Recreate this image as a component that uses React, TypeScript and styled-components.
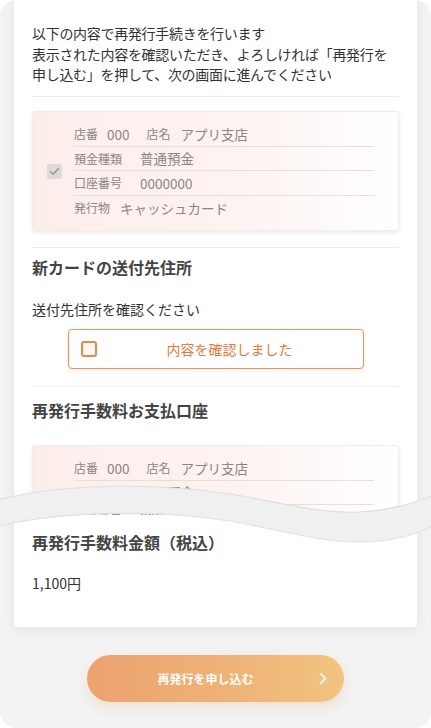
import React from 'react'
import styled, { createGlobalStyle } from 'styled-components'

const GlobalStyle = createGlobalStyle`
    html, body {
        margin: 0;
        padding: 0;
        background: #fff;
    }
    body {
        font-family: "Noto Sans CJK JP", "Noto Sans", sans-serif;
        color: #333;
    }
`

const Frame = styled.div`
    position: relative;
    width: 431px;
    height: 728px;
    background: #f3f3f3;
    border-radius: 16px;
    overflow: hidden;
`

const Card = styled.div`
    margin: 0 14px;
    padding: 23px 18px 34.5px;
    background: #fff;
    border-radius: 0 0 3px 3px;
    box-shadow: 0 2px 14px rgba(0, 0, 0, 0.07);
`

const Intro = styled.p`
    margin: 0;
    font-size: 14px;
    line-height: 20.5px;
    letter-spacing: -0.3px;
    color: #333;
`

const Divider = styled.div<{ $top: number }>`
    height: 1px;
    margin-top: ${p => p.$top}px;
    background: #ececec;
`

const Heading = styled.h2<{ $top: number }>`
    margin: ${p => p.$top}px 0 0;
    font-size: 16px;
    line-height: 24px;
    font-weight: 700;
    color: #444;
`

const Text = styled.p<{ $top: number }>`
    margin: ${p => p.$top}px 0 0;
    font-size: 14px;
    line-height: 20px;
    color: #333;
`

const AccountBox = styled.div<{ $top: number }>`
    display: flex;
    align-items: center;
    gap: 12px;
    margin-top: ${p => p.$top}px;
    padding: 10px 24px 10px 14px;
    border: 1px solid #ededed;
    border-radius: 3px;
    background: linear-gradient(90deg, #fcedeb 0%, #fdf3f1 55%, #ffffff 100%);
    box-shadow: 0 2px 5px rgba(0, 0, 0, 0.08);
`

const GrayCheck = styled.span`
    display: flex;
    align-items: center;
    justify-content: center;
    width: 15px;
    height: 15px;
    flex: none;
    border-radius: 2px;
    background: #dedada;
`

const Rows = styled.div`
    flex: 1;
`

const Row = styled.div`
    display: flex;
    align-items: center;
    height: 24.5px;
    box-sizing: border-box;
    color: #8a8686;
    &:not(:last-child) {
        border-bottom: 1px solid #e6dfde;
    }
`

const Label = styled.span<{ $gap: number }>`
    font-size: 12px;
    margin-right: ${p => p.$gap}px;
`

const Value = styled.span<{ $gap?: number }>`
    font-size: 13.5px;
    margin-right: ${p => p.$gap ?? 0}px;
`

const ConfirmButton = styled.button`
    display: flex;
    align-items: center;
    width: 296px;
    height: 40px;
    margin: 10.5px auto 0;
    padding: 0 0 0 12px;
    border: 1px solid #ec9257;
    border-radius: 4px;
    background: #fff;
    box-shadow: 0 2px 5px rgba(0, 0, 0, 0.08);
    font-family: inherit;
    cursor: pointer;
`

const OrangeBox = styled.span`
    width: 16px;
    height: 16px;
    flex: none;
    box-sizing: border-box;
    border: 2px solid #e8884a;
    border-radius: 3px;
    background: #fdf7f2;
`

const ConfirmLabel = styled.span`
    flex: 1;
    font-size: 14px;
    color: #e27c3c;
    text-align: center;
`

const CutArea = styled.div`
    position: relative;
    margin-top: 23px;
`

const Clip = styled.div`
    height: 70px;
    overflow: hidden;
    padding: 0 4px;
    margin: 0 -4px;
`

const Wave = styled.svg`
    position: absolute;
    left: -32px;
    top: 31px;
    width: 431px;
    height: 75px;
    overflow: visible;
`

const Amount = styled.p`
    margin: 19px 0 0;
    font-size: 14px;
    line-height: 20px;
    color: #333;
`

const SubmitButton = styled.button`
    position: relative;
    display: flex;
    align-items: center;
    justify-content: center;
    width: 257px;
    height: 47px;
    margin: 28px auto 0;
    padding: 0;
    border: none;
    border-radius: 24px;
    background: linear-gradient(90deg, #eda26f 0%, #efb277 55%, #f2c480 100%);
    box-shadow: 0 6px 14px rgba(225, 160, 110, 0.22);
    font-family: inherit;
    font-size: 12px;
    font-weight: 700;
    color: #fff;
    cursor: pointer;
`

const ButtonText = styled.span`
    margin-right: 20px;
`

const Chevron = styled.svg`
    position: absolute;
    right: 17px;
    top: 17px;
`

const Check = () => (
    <svg width="11" height="9" viewBox="0 0 11 9">
        <path d="M1.5 4.8 L4.2 7.3 L9.5 1.5" fill="none" stroke="#9a9696" strokeWidth="1.5" strokeLinecap="round" strokeLinejoin="round" />
    </svg>
)

const Account: React.FC<{ top: number }> = ({ top }) => (
    <AccountBox $top={top}>
        <GrayCheck><Check /></GrayCheck>
        <Rows>
            <Row>
                <Label $gap={9}>店番</Label>
                <Value $gap={17}>000</Value>
                <Label $gap={10}>店名</Label>
                <Value>アプリ支店</Value>
            </Row>
            <Row>
                <Label $gap={18}>預金種類</Label>
                <Value>普通預金</Value>
            </Row>
            <Row>
                <Label $gap={18}>口座番号</Label>
                <Value>0000000</Value>
            </Row>
            <Row>
                <Label $gap={10}>発行物</Label>
                <Value>キャッシュカード</Value>
            </Row>
        </Rows>
    </AccountBox>
)

const App: React.FC = () => {
    return (
        <Frame>
            <GlobalStyle />
            <Card>
                <Intro>
                    以下の内容で再発行手続きを行います<br />
                    表示された内容を確認いただき、よろしければ「再発行を<br />
                    申し込む」を押して、次の画面に進んでください
                </Intro>
                <Divider $top={11.5} />
                <Account top={14} />
                <Divider $top={16} />

                <Heading $top={7}>新カードの送付先住所</Heading>
                <Text $top={19.5}>送付先住所を確認ください</Text>
                <ConfirmButton>
                    <OrangeBox />
                    <ConfirmLabel>内容を確認しました</ConfirmLabel>
                </ConfirmButton>
                <Divider $top={17} />

                <Heading $top={11}>再発行手数料お支払口座</Heading>
                <CutArea>
                    <Clip>
                        <Account top={0} />
                    </Clip>
                    {/* torn section marker */}
                    <Wave viewBox="0 0 431 75">
                        <path
                            d="M-2 24 C60 8 150 6 230 18 C290 28 320 38 360 36 C395 34 415 26 433 20 L433 50 C415 58 395 66 360 66 C320 66 290 56 230 45 C150 32 60 36 -2 50 Z"
                            fill="#f0f0f0"
                        />
                        <path d="M-2 24 C60 8 150 6 230 18 C290 28 320 38 360 36 C395 34 415 26 433 20" fill="none" stroke="#dedede" strokeWidth="1.2" />
                        <path d="M433 50 C415 58 395 66 360 66 C320 66 290 56 230 45 C150 32 60 36 -2 50" fill="none" stroke="#e2e2e2" strokeWidth="1.2" />
                    </Wave>
                </CutArea>

                <Heading $top={14.5}>再発行手数料金額（税込）</Heading>
                <Amount>1,100円</Amount>
            </Card>

            <SubmitButton>
                <ButtonText>再発行を申し込む</ButtonText>
                <Chevron width="8" height="13" viewBox="0 0 8 13">
                    <path d="M1.5 1.5 L6.5 6.5 L1.5 11.5" fill="none" stroke="#fff" strokeWidth="1.6" strokeLinecap="round" strokeLinejoin="round" />
                </Chevron>
            </SubmitButton>
        </Frame>
    )
}

export default App
